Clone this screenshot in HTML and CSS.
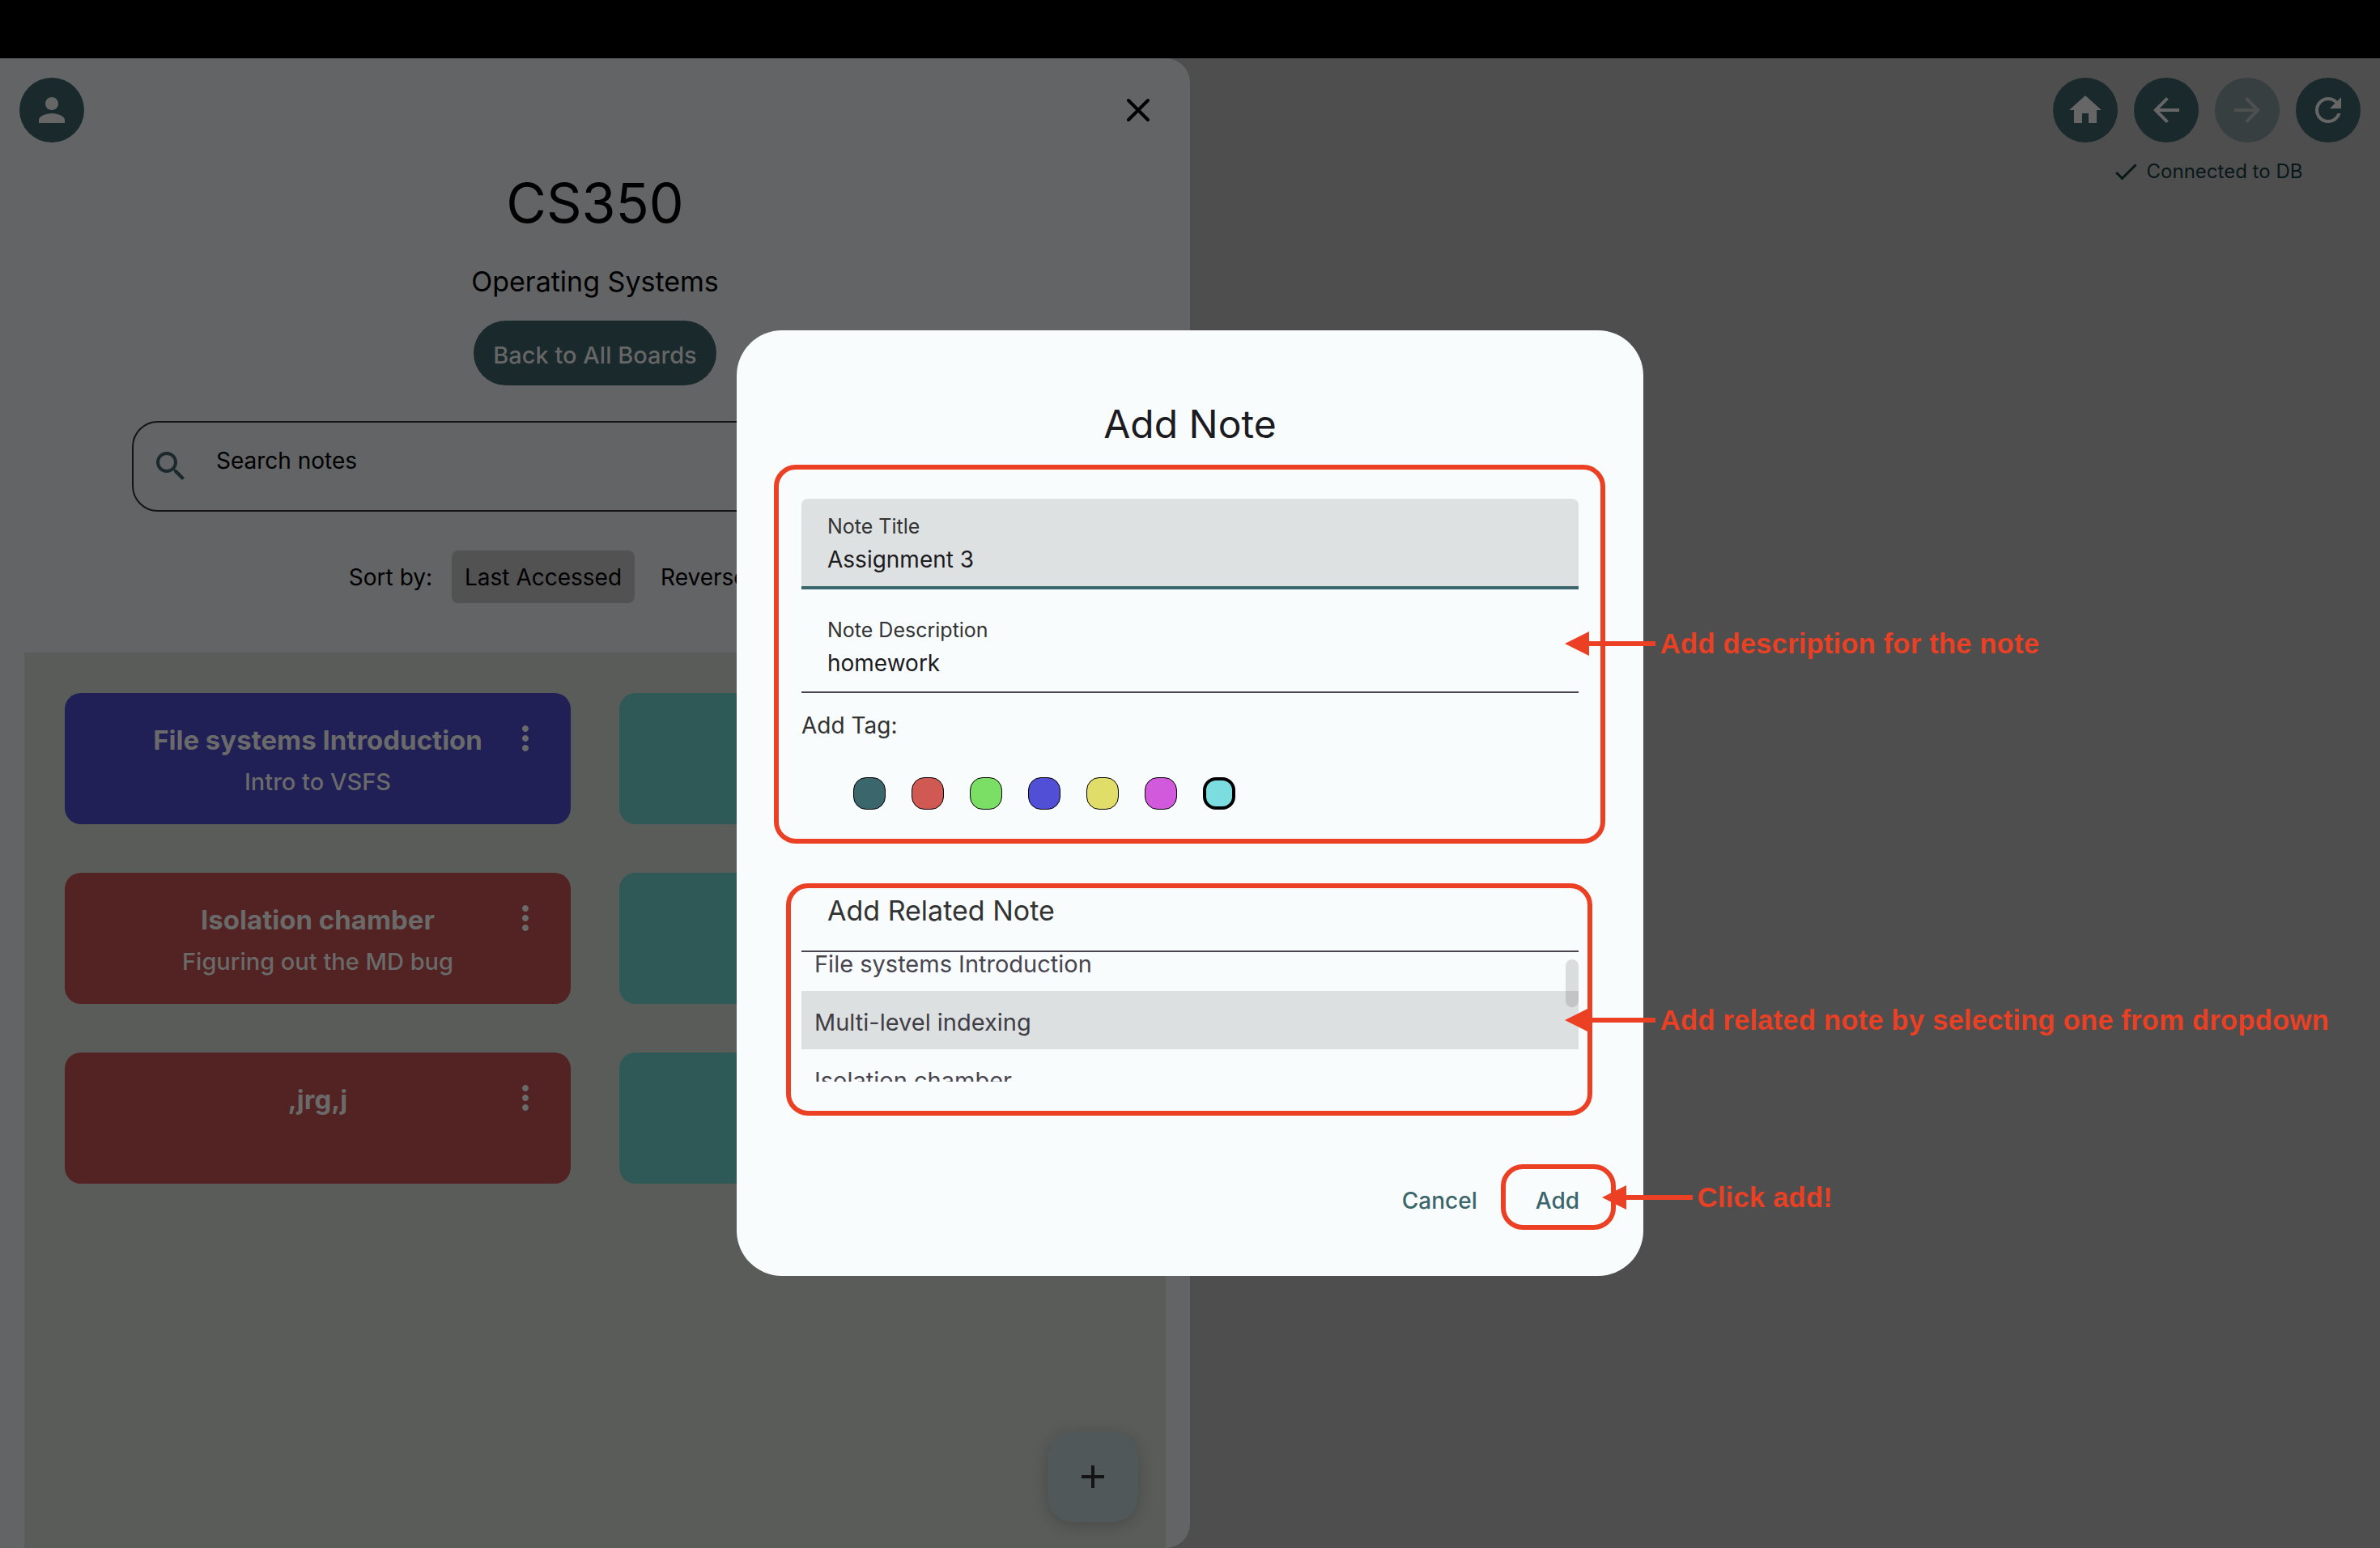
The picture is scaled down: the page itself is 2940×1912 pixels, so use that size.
FILE: index.html
```html
<!DOCTYPE html>
<html lang="en">
<head>
<meta charset="utf-8">
<title>CS350 – Add Note</title>
<link rel="stylesheet" href="styles.css">
</head>
<body>
<div class="menu-strip"></div>
<div class="app">
  <main class="panel">
    <div class="panel-bar">
      <button class="round-btn" aria-label="Account"><svg class="icon" viewBox="0 0 24 24"><path d="M12 12c2.21 0 4-1.79 4-4s-1.79-4-4-4-4 1.79-4 4 1.79 4 4 4zm0 2c-2.67 0-8 1.34-8 4v2h16v-2c0-2.66-5.33-4-8-4z"/></svg></button>
      <button class="close-btn" aria-label="Close panel"><svg class="icon" viewBox="0 0 48 48"><path d="M12 12L36 36M36 12L12 36" fill="none" stroke="currentColor" stroke-width="4" stroke-linecap="round"/></svg></button>
    </div>
    <h1 class="board-title">CS350</h1>
    <p class="board-subtitle">Operating Systems</p>
    <button class="back-btn">Back to All Boards</button>
    <div class="search">
      <svg class="icon" viewBox="0 0 24 24"><path d="M15.5 14h-.79l-.28-.27C15.41 12.59 16 11.11 16 9.5 16 5.91 13.09 3 9.5 3S3 5.91 3 9.5 5.91 16 9.5 16c1.61 0 3.09-.59 4.23-1.57l.27.28v.79l5 4.99L20.49 19l-4.99-5zm-6 0C7.01 14 5 11.99 5 9.5S7.01 5 9.5 5 14 7.01 14 9.5 11.99 14 9.5 14z"/></svg>
      <input class="search-input" type="text" placeholder="Search notes" aria-label="Search notes">
    </div>
    <div class="sort">
      <span class="sort-label">Sort by:</span>
      <button class="sort-btn sort-btn-active">Last Accessed</button>
      <button class="sort-btn">Reversed Order</button>
    </div>
    <section class="notes">
      <article class="note note-blue">
        <h2 class="note-title">File systems Introduction</h2>
        <p class="note-text">Intro to VSFS</p>
        <button class="note-menu" aria-label="Note menu"><svg class="icon" viewBox="0 0 24 24"><path d="M12 8c1.100 0 2-.9 2-2s-.9-2-2-2-2 .9-2 2 .9 2 2 2zm0 2c-1.100 0-2 .9-2 2s.9 2 2 2 2-.9 2-2-.9-2-2-2zm0 6c-1.100 0-2 .9-2 2s.9 2 2 2 2-.9 2-2-.9-2-2-2z"/></svg></button>
      </article>
      <article class="note note-cyan"></article>
      <article class="note note-red">
        <h2 class="note-title">Isolation chamber</h2>
        <p class="note-text">Figuring out the MD bug</p>
        <button class="note-menu" aria-label="Note menu"><svg class="icon" viewBox="0 0 24 24"><path d="M12 8c1.100 0 2-.9 2-2s-.9-2-2-2-2 .9-2 2 .9 2 2 2zm0 2c-1.100 0-2 .9-2 2s.9 2 2 2 2-.9 2-2-.9-2-2-2zm0 6c-1.100 0-2 .9-2 2s.9 2 2 2 2-.9 2-2-.9-2-2-2z"/></svg></button>
      </article>
      <article class="note note-cyan"></article>
      <article class="note note-red">
        <h2 class="note-title">,jrg,j</h2>
        <button class="note-menu" aria-label="Note menu"><svg class="icon" viewBox="0 0 24 24"><path d="M12 8c1.100 0 2-.9 2-2s-.9-2-2-2-2 .9-2 2 .9 2 2 2zm0 2c-1.100 0-2 .9-2 2s.9 2 2 2 2-.9 2-2-.9-2-2-2zm0 6c-1.100 0-2 .9-2 2s.9 2 2 2 2-.9 2-2-.9-2-2-2z"/></svg></button>
      </article>
      <article class="note note-cyan"></article>
    </section>
    <button class="fab" aria-label="New note"><svg class="icon" viewBox="0 0 24 24"><path d="M19 13h-6v6h-2v-6H5v-2h6V5h2v6h6v2z"/></svg></button>
  </main>
  <aside class="side">
    <div class="toolbar">
      <nav class="toolbar-buttons">
        <button class="round-btn" aria-label="Home"><svg class="icon" viewBox="0 0 24 24"><path d="M10 20v-6h4v6h5v-8h3L12 3 2 12h3v8z"/></svg></button>
        <button class="round-btn" aria-label="Back"><svg class="icon" viewBox="0 0 24 24"><path d="M20 11H7.830l5.590-5.590L12 4l-8 8 8 8 1.410-1.410L7.830 13H20v-2z"/></svg></button>
        <button class="round-btn" aria-label="Forward" disabled><svg class="icon" viewBox="0 0 24 24"><path d="M12 4l-1.410 1.410L16.170 11H4v2h12.170l-5.580 5.590L12 20l8-8z"/></svg></button>
        <button class="round-btn" aria-label="Refresh"><svg class="icon" viewBox="0 0 24 24"><path d="M17.650 6.350C16.200 4.900 14.210 4 12 4c-4.420 0-7.990 3.580-7.990 8s3.570 8 7.990 8c3.730 0 6.840-2.550 7.730-6h-2.080c-.82 2.330-3.040 4-5.650 4-3.310 0-6-2.690-6-6s2.690-6 6-6c1.660 0 3.140.69 4.220 1.780L13 11h7V4l-2.350 2.350z"/></svg></button>
      </nav>
      <p class="status"><svg class="status-icon" viewBox="0 0 24 24"><path d="M9 16.170L4.830 12l-1.420 1.410L9 19 21 7l-1.410-1.410z"/></svg>Connected to DB</p>
    </div>
  </aside>
</div>

<div class="overlay">
  <form class="dialog" role="dialog" aria-labelledby="dialog-title">
    <h2 class="dialog-title" id="dialog-title">Add Note</h2>
    <div class="field field-active">
      <label class="field-label" for="note-title">Note Title</label>
      <input class="field-input" id="note-title" type="text" value="Assignment 3">
    </div>
    <div class="field">
      <label class="field-label" for="note-desc">Note Description</label>
      <input class="field-input" id="note-desc" type="text" value="homework">
    </div>
    <fieldset class="tags">
      <legend class="tags-label">Add Tag:</legend>
      <div class="swatches">
        <input class="swatch swatch-teal" type="radio" name="tag" aria-label="Teal">
        <input class="swatch swatch-red" type="radio" name="tag" aria-label="Red">
        <input class="swatch swatch-green" type="radio" name="tag" aria-label="Green">
        <input class="swatch swatch-blue" type="radio" name="tag" aria-label="Blue">
        <input class="swatch swatch-yellow" type="radio" name="tag" aria-label="Yellow">
        <input class="swatch swatch-pink" type="radio" name="tag" aria-label="Pink">
        <input class="swatch swatch-cyan" type="radio" name="tag" aria-label="Cyan" checked>
      </div>
    </fieldset>
    <input class="related-input" type="text" placeholder="Add Related Note" aria-label="Add Related Note">
    <div class="related-list">
      <button type="button" class="related-item">File systems Introduction</button>
      <button type="button" class="related-item related-item-active">Multi-level indexing</button>
      <button type="button" class="related-item">Isolation chamber</button>
      <span class="scroll-thumb"></span>
    </div>
    <div class="actions">
      <button type="button" class="text-btn">Cancel</button>
      <button type="button" class="text-btn">Add</button>
    </div>

    <div class="mark mark-fields"></div>
    <div class="mark mark-related"></div>
    <div class="mark mark-add"></div>
    <div class="callout callout-desc"><svg class="arrow" viewBox="0 0 112 32"><path d="M0 16L30 1V13H112V19H30V31z"/></svg>Add description for the note</div>
    <div class="callout callout-related"><svg class="arrow" viewBox="0 0 112 32"><path d="M0 16L30 1V13H112V19H30V31z"/></svg>Add related note by selecting one from dropdown</div>
    <div class="callout callout-add"><svg class="arrow" viewBox="0 0 112 32"><path d="M0 16L30 1V13H112V19H30V31z"/></svg>Click add!</div>
  </form>
</div>
</body>
</html>
```
FILE: styles.css
```css
* { box-sizing: border-box; }

body {
  margin: 0;
  min-height: 100vh;
  display: flex;
  flex-direction: column;
  background: #4e4e4e;
  color: #000;
  font-family: Inter, "Liberation Sans", sans-serif;
  font-size: 28px;
  line-height: 40px;
}

button, input { font: inherit; color: inherit; }
button { border: 0; padding: 0; background: none; }
h1, h2, p { margin: 0; font-weight: 400; }

.menu-strip { height: 72px; background: #000; }

.app {
  flex: 1;
  display: grid;
  grid-template-columns: 1fr 1fr;
}

.icon { display: block; width: 48px; height: 48px; fill: currentColor; }

/* Board panel */
.panel {
  position: relative;
  display: flex;
  flex-direction: column;
  align-items: center;
  background: #636466;
  border-radius: 0 30px 30px 0;
}

.panel-bar {
  align-self: stretch;
  display: flex;
  justify-content: space-between;
  align-items: center;
  padding: 24px 40px 0 24px;
}

.round-btn {
  display: flex;
  align-items: center;
  justify-content: center;
  width: 80px;
  height: 80px;
  border-radius: 50%;
  background: #1a292c;
  color: #666;
}
.round-btn:disabled { background: #383f40; color: #4e5050; }

.board-title { margin-top: 30px; font-size: 68px; line-height: 88px; }
.board-subtitle { margin-top: 30px; font-size: 34px; line-height: 48px; }

.back-btn {
  margin-top: 24px;
  height: 80px;
  padding: 6px 24px 0;
  border-radius: 40px;
  background: #1a292c;
  color: #666;
  font-size: 29px;
  font-weight: 500;
}

.search {
  display: flex;
  align-items: center;
  gap: 32px;
  width: 1144px;
  max-width: 100%;
  height: 112px;
  margin-top: 44px;
  padding: 0 22px;
  border: 2px solid #141416;
  border-radius: 32px;
  color: #1a292c;
}
.search-input {
  flex: 1;
  height: 108px;
  padding: 0 0 14px;
  border: 0;
  background: none;
  outline: 0;
}
.search-input::placeholder { color: #000; opacity: 1; }

.sort { display: flex; align-items: center; gap: 16px; margin-top: 48px; }
.sort-label { padding-right: 8px; }
.sort-btn { height: 65px; padding: 0 16px; border-radius: 8px; }
.sort-btn-active { background: #525252; }

.notes {
  align-self: stretch;
  flex: 1;
  display: grid;
  grid-template-columns: 1fr 1fr;
  grid-auto-rows: 162px;
  gap: 60px;
  margin: 61px 30px 0;
  padding: 50px;
  background: #5a5c5a;
}
.note {
  position: relative;
  padding: 34px 24px;
  border-radius: 20px;
  color: #6a6a6a;
  text-align: center;
}
.note-blue { background: #201f56; }
.note-red { background: #522322; }
.note-cyan { background: #2f5957; }
.note-title { font-size: 33px; line-height: 48px; font-weight: 700; }
.note-text { margin-top: 8px; font-size: 29px; font-weight: 500; }
.note-menu { position: absolute; top: 32px; right: 32px; }

.fab {
  position: absolute;
  right: 64px;
  bottom: 32px;
  display: flex;
  align-items: center;
  justify-content: center;
  width: 112px;
  height: 112px;
  border-radius: 32px;
  background: #505859;
  color: #141414;
  box-shadow: 0 4px 20px rgba(0, 0, 0, 0.2);
}

/* Right side */
.side { display: flex; justify-content: flex-end; align-items: flex-start; padding: 24px; }
.toolbar { display: flex; flex-direction: column; align-items: center; gap: 16px; }
.toolbar-buttons { display: flex; gap: 20px; }
.status {
  display: flex;
  align-items: center;
  gap: 8px;
  color: #081818;
  font-size: 24px;
}
.status-icon { width: 36px; height: 36px; fill: currentColor; }

/* Dialog */
.overlay {
  position: fixed;
  inset: 72px 0 0;
  display: flex;
  align-items: center;
  justify-content: center;
}
.dialog {
  position: relative;
  display: flex;
  flex-direction: column;
  width: 1120px;
  padding: 84px 80px 53px;
  border-radius: 56px;
  background: #f8fcfd;
  color: #1c1b1f;
}
.dialog-title { font-size: 48px; line-height: 64px; text-align: center; }

.field {
  display: flex;
  flex-direction: column;
  height: 112px;
  margin-top: 16px;
  padding: 16px 32px 0;
  border-bottom: 2px solid #49454f;
}
.field-active {
  margin-top: 60px;
  border-bottom: 4px solid #3b666c;
  border-radius: 8px 8px 0 0;
  background: #dee1e2;
}
.field-label { font-size: 25px; line-height: 36px; color: #333; }
.field-input {
  height: 46px;
  padding: 0;
  border: 0;
  background: none;
  outline: 0;
}

.tags { margin: 0; padding: 0; border: 0; }
.tags-label { padding: 20px 0 0; color: #333; }
.swatches { display: flex; gap: 32px; padding: 44px 64px 0; }
.swatch {
  appearance: none;
  width: 40px;
  height: 40px;
  margin: 0;
  border: 1px solid #000;
  border-radius: 16px;
}
.swatch:checked { border-width: 4px; }
.swatch-teal { background: #3b666c; }
.swatch-red { background: #d05954; }
.swatch-green { background: #7bde65; }
.swatch-blue { background: #514fd6; }
.swatch-yellow { background: #e0de68; }
.swatch-pink { background: #d05adb; }
.swatch-cyan { background: #7bdde0; }

.related-input {
  height: 112px;
  margin-top: 64px;
  padding: 10px 32px 0;
  border: 0;
  border-bottom: 2px solid #49454f;
  background: none;
  font-size: 34px;
  outline: 0;
}
.related-input::placeholder { color: #333; opacity: 1; }

.related-list {
  position: relative;
  display: flex;
  flex-direction: column;
  justify-content: center;
  height: 160px;
  padding-top: 8px;
  overflow: hidden;
}
.related-item {
  flex: none;
  height: 72px;
  padding: 6px 16px 0;
  color: #49454f;
  font-size: 29px;
  text-align: left;
}
.related-item-active { background: #dde0e1; color: #403d45; }
.scroll-thumb {
  position: absolute;
  top: 9px;
  right: 0;
  width: 16px;
  height: 59px;
  border-radius: 8px;
  background: rgba(0, 0, 0, 0.12);
}

.actions {
  display: flex;
  justify-content: flex-end;
  gap: 24px;
  margin: 107px -25px 0 0;
}
.text-btn { height: 80px; padding: 0 24px; color: #3b666c; font-weight: 500; }

/* Tutorial annotations drawn over the dialog */
.mark { position: absolute; border: 6px solid #ec4025; border-radius: 27px; pointer-events: none; }
.mark-fields { left: 46px; top: 166px; width: 1027px; height: 468px; }
.mark-related { left: 61px; top: 683px; width: 996px; height: 287px; }
.mark-add { left: 944px; top: 1030px; width: 142px; height: 81px; }

.callout {
  position: absolute;
  display: flex;
  align-items: center;
  gap: 6px;
  color: #ec4025;
  font: 700 35px/40px "Liberation Sans", Arial, sans-serif;
  white-space: nowrap;
}
.arrow { width: 112px; height: 32px; fill: currentColor; }
.callout-desc { left: 1023px; top: 367px; }
.callout-related { left: 1023px; top: 832px; }
.callout-add { left: 1069px; top: 1051px; }
```
